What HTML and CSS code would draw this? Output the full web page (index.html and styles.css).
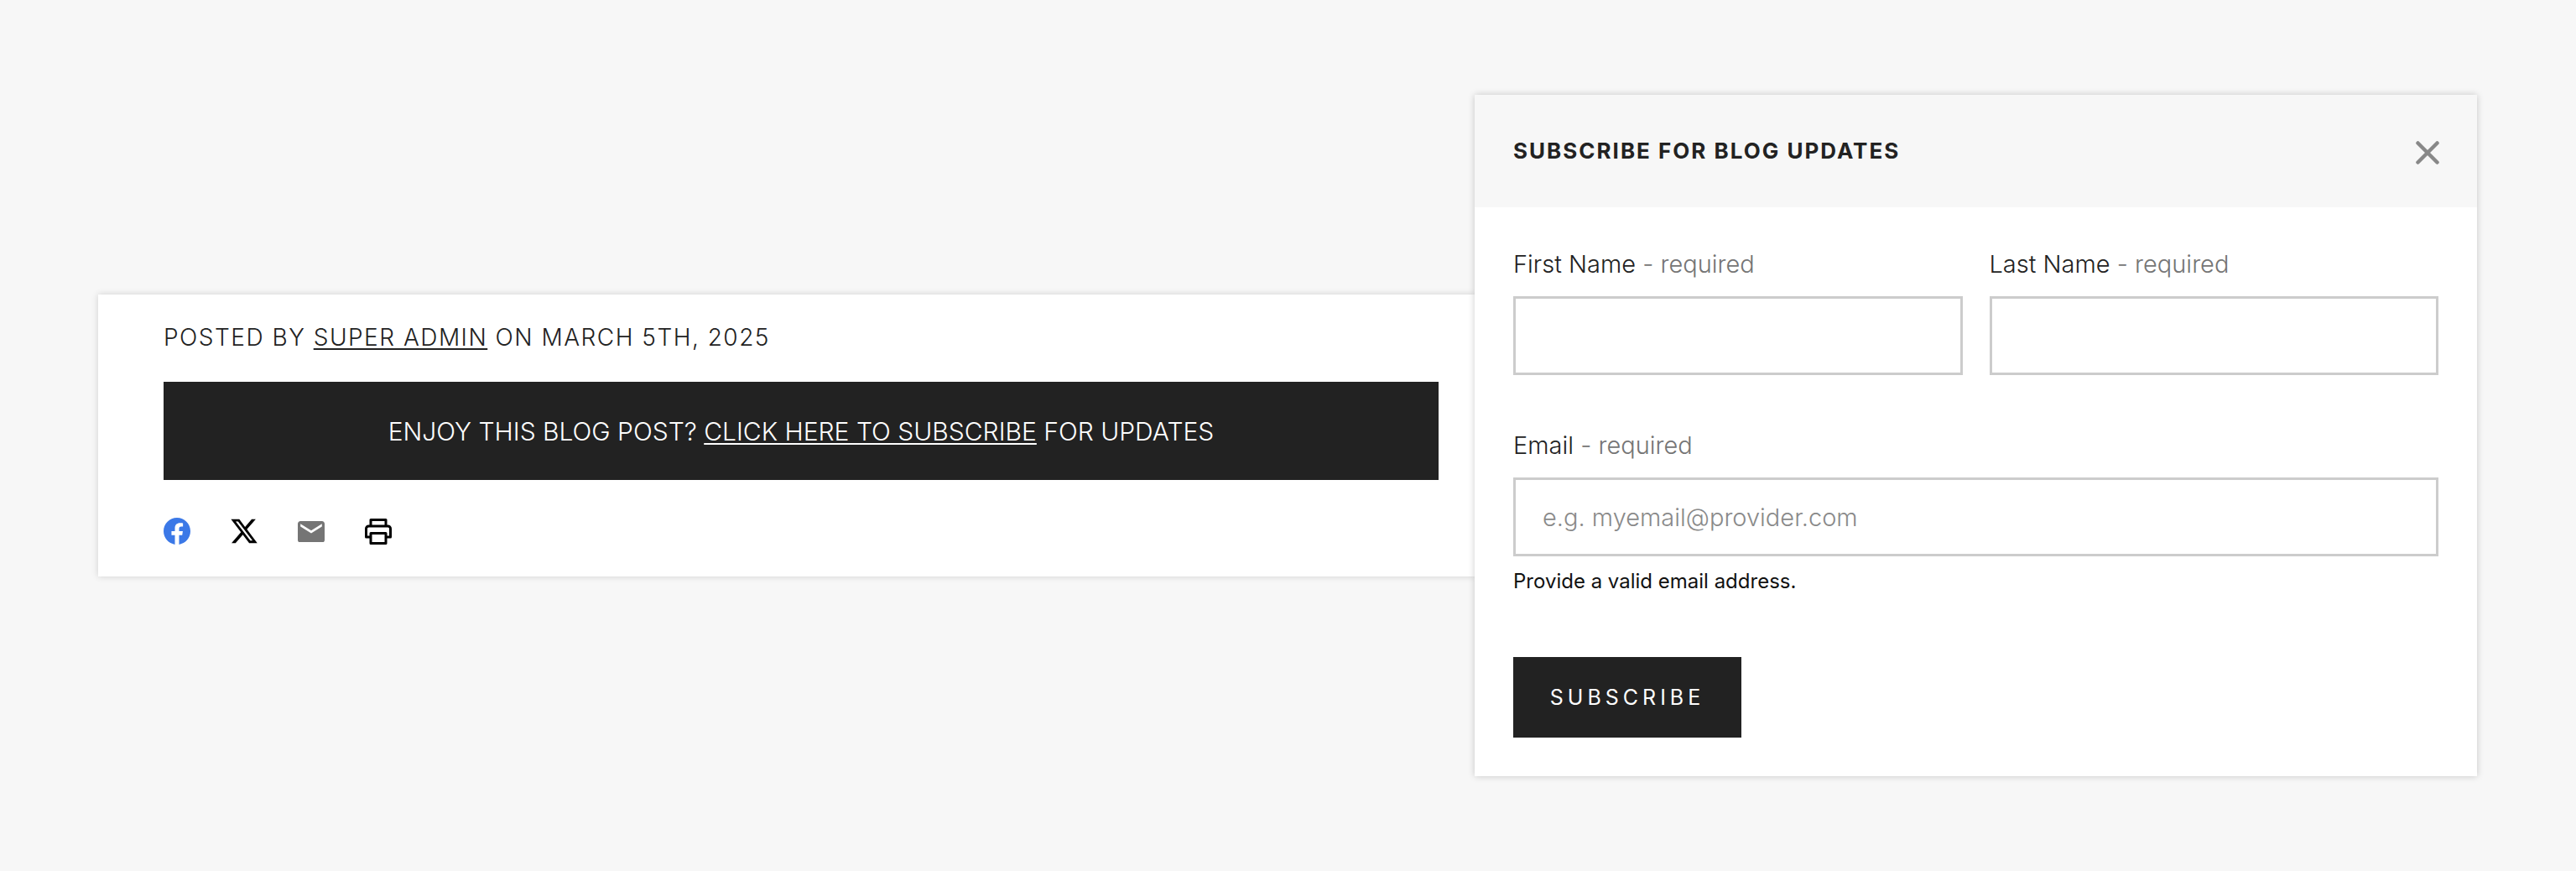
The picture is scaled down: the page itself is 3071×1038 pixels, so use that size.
FILE: index.html
```html
<!DOCTYPE html>
<html lang="en">
  <head>
    <meta charset="UTF-8" />
    <title>Blog post footer</title>
    <link rel="stylesheet" href="styles.css">
  </head>

  <body>
    <div class="post-card">
      <p class="post-meta">Posted by <a href="#">Super Admin</a> on March 5th, 2025</p>
      <div class="cta">Enjoy this blog post? <a href="#">Click here to subscribe</a> for updates</div>
      <div class="share">
        <a href="#" class="share-icon">
          <svg viewBox="0 0 24 24" width="32" height="32"><path fill="#3b78e7" d="M24 12.073c0-6.627-5.373-12-12-12s-12 5.373-12 12c0 5.99 4.388 10.954 10.125 11.854v-8.385H7.078v-3.47h3.047V9.43c0-3.007 1.792-4.669 4.533-4.669 1.312 0 2.686.235 2.686.235v2.953H15.83c-1.491 0-1.956.925-1.956 1.874v2.25h3.328l-.532 3.47h-2.796v8.385C19.612 23.027 24 18.062 24 12.073z"/></svg>
        </a>
        <a href="#" class="share-icon">
          <svg viewBox="1 2 22 20" width="32" height="30"><path fill="#000" d="M18.244 2.25h3.308l-7.227 8.26 8.502 11.24H16.17l-5.214-6.817L4.99 21.75H1.68l7.73-8.835L1.254 2.25H8.08l4.713 6.231zm-1.161 17.52h1.833L7.084 4.126H5.117z"/></svg>
        </a>
        <a href="#" class="share-icon">
          <svg viewBox="2 4 20 15.5" width="32" height="25"><path fill="#757575" d="M20 4H4c-1.1 0-2 .9-2 2v12c0 1.1.9 2 2 2h16c1.1 0 2-.9 2-2V6c0-1.1-.9-2-2-2zm0 4l-8 5-8-5V6l8 5 8-5v2z"/></svg>
        </a>
        <a href="#" class="share-icon">
          <svg viewBox="0 0 32 32" width="32" height="32"><path fill="none" stroke="#000" stroke-width="3" stroke-linejoin="round" d="M7 10V2.5h18V10M7 23H1.5V13a3 3 0 0 1 3-3h23a3 3 0 0 1 3 3v10H25M7 18.500h18V30.500H7z"/></svg>
        </a>
      </div>
    </div>

    <div class="modal">
      <div class="modal-header">
        <h2 class="modal-title">Subscribe for blog updates</h2>
        <svg class="modal-close" viewBox="0 0 28 28" width="28" height="28"><path fill="none" stroke="#888" stroke-width="4.5" stroke-linecap="round" d="M2.500 2.500l23 23M25.500 2.500l-23 23"/></svg>
      </div>
      <form class="modal-body">
        <div class="name-row">
          <div class="field">
            <label>First Name <span class="req">- required</span></label>
            <input type="text">
          </div>
          <div class="field">
            <label>Last Name <span class="req">- required</span></label>
            <input type="text">
          </div>
        </div>
        <div class="field email-field">
          <label>Email <span class="req">- required</span></label>
          <input type="text" placeholder="e.g. myemail@provider.com">
          <div class="help">Provide a valid email address.</div>
        </div>
        <button type="button" class="btn">Subscribe</button>
      </form>
    </div>
  </body>
</html>
```

FILE: styles.css
```css
* {
  box-sizing: border-box;
}

body {
  margin: 0;
  height: 1038px;
  padding: 0 118px 0 117px;
  display: flex;
  align-items: center;
  background: #f7f7f7;
  color: #222;
  font-family: Inter, "Liberation Sans", sans-serif;
  font-weight: 300;
}

a {
  color: inherit;
  text-underline-offset: 3px;
  text-decoration-thickness: 2px;
}

.post-card {
  flex: 1;
  background: #fff;
  padding: 31px 43px 38px 78px;
  box-shadow: 0 0 8px rgba(0, 0, 0, 0.16);
}

.post-meta {
  margin: 0;
  line-height: 40px;
  font-size: 28px;
  letter-spacing: 1.5px;
  text-transform: uppercase;
}

.cta {
  margin-top: 33px;
  height: 117px;
  display: flex;
  align-items: center;
  justify-content: center;
  white-space: pre-wrap;
  background: #222;
  color: #fff;
  font-size: 30px;
  text-transform: uppercase;
}

.share {
  margin-top: 45px;
  display: flex;
  gap: 48px;
  align-items: center;
  height: 32px;
}

.share-icon {
  display: flex;
}

.modal {
  flex: none;
  width: 1195px;
  z-index: 1;
  background: #fff;
  box-shadow: 0 0 8px rgba(0, 0, 0, 0.2);
}

.modal-header {
  height: 134px;
  padding: 0 45px 0 46px;
  display: flex;
  align-items: center;
  justify-content: space-between;
  background: #f7f7f7;
}

.modal-title {
  margin: 0 0 2px;
  font-size: 26px;
  font-weight: 700;
  letter-spacing: 2px;
  text-transform: uppercase;
}

.modal-close {
  margin-top: 4px;
}

.modal-body {
  padding: 48px 46px 46px;
}

.name-row {
  display: flex;
  gap: 32px;
}

.field {
  flex: 1;
}

.field label {
  display: block;
  line-height: 40px;
  margin-bottom: 18px;
  font-size: 29px;
}

.req {
  color: #757575;
}

.field input {
  display: block;
  width: 100%;
  height: 94px;
  padding: 0 32px;
  border: 3px solid #ccc;
  background: #fff;
  font-family: inherit;
  font-weight: 300;
  font-size: 29px;
}

.field input::placeholder {
  color: #8a8a8a;
  opacity: 1;
}

.email-field {
  margin-top: 64px;
}

.help {
  margin-top: 13px;
  line-height: 34px;
  font-size: 24px;
  font-weight: 400;
  color: #111;
}

.btn {
  display: block;
  margin-top: 73px;
  width: 272px;
  height: 96px;
  border: 0;
  background: #222;
  color: #fff;
  font-family: inherit;
  font-weight: 400;
  font-size: 25px;
  letter-spacing: 5px;
  text-transform: uppercase;
}
```
